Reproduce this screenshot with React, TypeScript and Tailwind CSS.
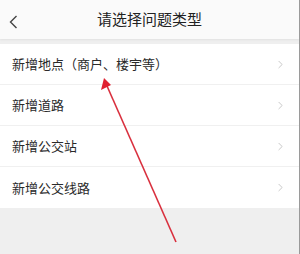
import { ChevronRight } from 'lucide-react';

const ITEMS = ['新增地点（商户、楼宇等）', '新增道路', '新增公交站', '新增公交线路'];

function App() {
  return (
    <div
      className="relative h-[254px] w-[300px] overflow-hidden bg-[#efefef] border-r border-[#9a9a9a]"
      style={{ fontFamily: '"Noto Sans CJK SC", "Noto Sans", sans-serif' }}
    >
      <header className="relative flex h-[39px] items-center justify-center bg-[#fafafa] shadow-[0_1px_2px_rgba(0,0,0,0.06)]">
        <svg className="absolute left-[9px] top-[15px]" width="9" height="14" viewBox="0 0 9 14">
          <path d="M7.5 1 L1.5 7 L7.5 13" fill="none" stroke="#444" strokeWidth="1.4" />
        </svg>
        <span className="text-[15px] text-[#222]">请选择问题类型</span>
      </header>
      <ul className="mt-[5px] bg-white">
        {ITEMS.map((item, i) => (
          <li
            key={item}
            className={`flex h-[41px] items-center justify-between pl-[12px] pr-[12px] ${i < ITEMS.length - 1 ? 'border-b border-[#f0f0f0]' : ''}`}
          >
            <span className="text-[13px] text-[#2a2a2a]">{item}</span>
            <ChevronRight className="h-[13px] w-[13px] text-[#b8b8b8]" strokeWidth={1.4} />
          </li>
        ))}
      </ul>
      <svg className="pointer-events-none absolute left-0 top-0" width="300" height="254">
        <line x1="176" y1="242" x2="107" y2="86" stroke="#d9303e" strokeWidth="1.6" />
        <polygon points="104,78 101,90 111,85" fill="#e02030" />
      </svg>
    </div>
  );
}

export default App;
